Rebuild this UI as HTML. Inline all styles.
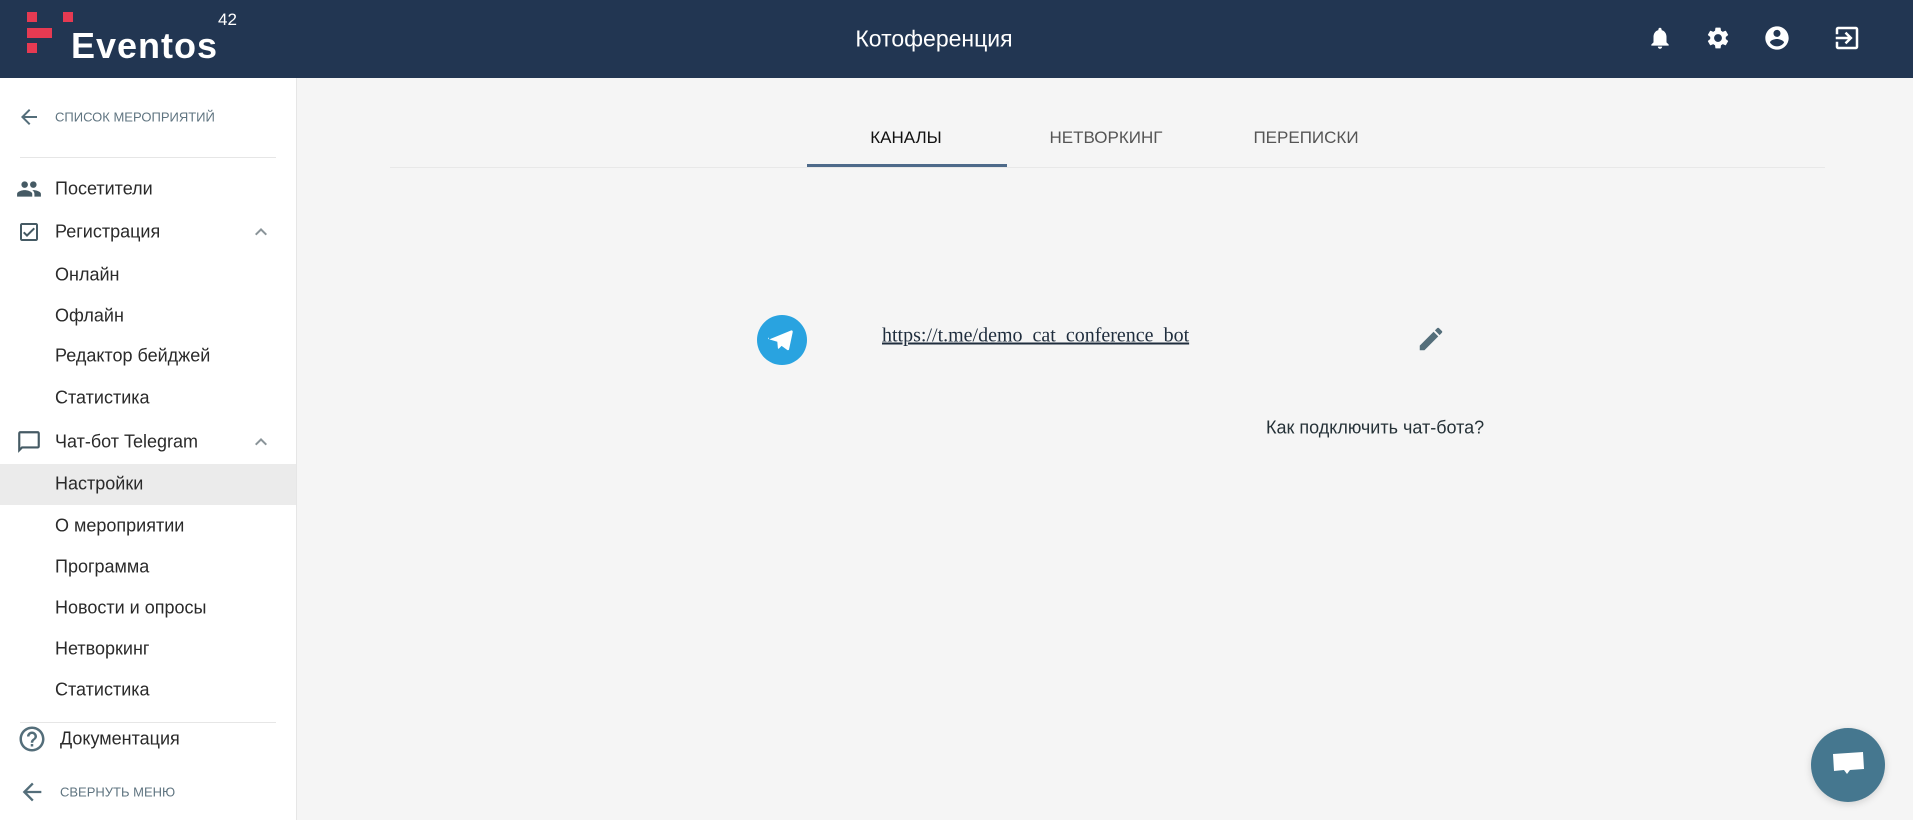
<!DOCTYPE html>
<html><head><meta charset="utf-8"><style>
*{margin:0;padding:0;box-sizing:border-box}
body{width:1913px;height:820px;overflow:hidden;background:#f5f5f5;font-family:"Liberation Sans",Roboto,sans-serif;position:relative;color:#263238}
.hdr{position:absolute;left:0;top:0;width:1913px;height:78px;background:#223652}
.side{position:absolute;left:0;top:78px;width:297px;height:742px;background:#fff;border-right:1px solid #e6e6e6}
.t{position:absolute;white-space:nowrap;transform:translateY(-50%)}
.mi{font-size:18px;color:#2a2a2a;left:55px}
.ic{position:absolute;transform:translate(-50%,-50%)}
</style></head><body>
<div class="hdr">
 <svg style="position:absolute;left:27px;top:12px" width="46" height="41" viewBox="0 0 46 41">
  <rect x="0" y="0" width="10" height="10" fill="#e63a52"/><rect x="36" y="0" width="10" height="10" fill="#e63a52"/>
  <rect x="0" y="16" width="25" height="10" fill="#e63a52"/><rect x="0" y="31" width="10" height="10" fill="#e63a52"/>
 </svg>
 <div class="t" style="left:71px;top:46px;font-size:36px;font-weight:bold;color:#fff;letter-spacing:1px">Eventos</div>
 <div class="t" style="left:218px;top:20px;font-size:17px;color:#fff">42</div>
 <div class="t" style="left:934px;top:39px;font-size:23px;color:#fff;transform:translate(-50%,-50%)">Котоференция</div>
 <svg class="ic" style="left:1660px;top:38px" width="26" height="26" viewBox="0 0 24 24" fill="#fff"><path d="M12 22c1.1 0 2-.9 2-2h-4c0 1.1.9 2 2 2zm6-6v-5c0-3.07-1.64-5.640-4.5-6.32V4c0-.83-.67-1.5-1.5-1.5s-1.5.67-1.5 1.5v.68C7.63 5.36 6 7.92 6 11v5l-2 2v1h16v-1l-2-2z"/></svg>
 <svg class="ic" style="left:1718px;top:38px" width="26" height="26" viewBox="0 0 24 24" fill="#fff"><path d="M19.14 12.94c.04-.3.06-.61.06-.94 0-.32-.02-.64-.07-.94l2.03-1.58c.18-.14.23-.41.12-.61l-1.92-3.320c-.12-.22-.37-.29-.59-.22l-2.39.96c-.5-.38-1.03-.7-1.62-.94l-.36-2.54c-.04-.24-.24-.41-.48-.41h-3.84c-.24 0-.43.17-.47.41l-.36 2.54c-.59.24-1.13.57-1.62.94l-2.39-.96c-.22-.08-.47 0-.59.22L2.74 8.87c-.12.21-.08.47.12.61l2.03 1.58c-.05.3-.09.63-.09.94s.02.64.07.94l-2.03 1.58c-.18.14-.23.41-.12.61l1.92 3.32c.12.22.37.29.59.22l2.39-.96c.5.38 1.03.7 1.62.94l.36 2.54c.05.24.24.41.48.41h3.84c.24 0 .44-.17.47-.41l.36-2.54c.59-.24 1.13-.56 1.62-.94l2.39.96c.22.08.47 0 .59-.22l1.92-3.32c.12-.22.07-.47-.12-.61l-2.01-1.58zM12 15.6c-1.98 0-3.6-1.62-3.6-3.6s1.62-3.6 3.6-3.6 3.6 1.62 3.6 3.6-1.62 3.6-3.6 3.6z"/></svg>
 <svg class="ic" style="left:1777px;top:38px" width="28" height="28" viewBox="0 0 24 24" fill="#fff"><path d="M12 2C6.48 2 2 6.48 2 12s4.48 10 10 10 10-4.48 10-10S17.52 2 12 2zm0 3c1.66 0 3 1.34 3 3s-1.34 3-3 3-3-1.34-3-3 1.34-3 3-3zm0 14.2c-2.5 0-4.71-1.28-6-3.22.03-1.99 4-3.08 6-3.08 1.99 0 5.97 1.09 6 3.08-1.29 1.94-3.5 3.22-6 3.22z"/></svg>
 <svg class="ic" style="left:1847px;top:38px" width="30" height="30" viewBox="0 0 24 24" fill="#fff"><path d="M10.09 15.59L11.5 17l5-5-5-5-1.41 1.41L12.67 11H3v2h9.67l-2.58 2.59zM19 3H5c-1.11 0-2 .9-2 2v4h2V5h14v14H5v-4H3v4c0 1.1.89 2 2 2h14c1.1 0 2-.9 2-2V5c0-1.1-.9-2-2-2z"/></svg>
</div>
<div class="side">
 <div style="position:absolute;left:0;top:386px;width:296px;height:41px;background:#ebebeb"></div>
 <div style="position:absolute;left:20px;top:79px;width:256px;height:1px;background:#e6e6e6"></div>
 <div style="position:absolute;left:20px;top:644px;width:256px;height:1px;background:#e6e6e6"></div>
</div>
<svg class="ic" style="left:29px;top:117px" width="24" height="24" viewBox="0 0 24 24" fill="#546e7a"><path d="M20 11H7.83l5.59-5.59L12 4l-8 8 8 8 1.41-1.41L7.83 13H20v-2z"/></svg>
<div class="t" style="left:55px;top:117px;font-size:13px;color:#5f7480">СПИСОК МЕРОПРИЯТИЙ</div>
<svg class="ic" style="left:29px;top:189px" width="26" height="26" viewBox="0 0 24 24" fill="#455a64"><path d="M16 11c1.66 0 2.99-1.34 2.99-3S17.66 5 16 5c-1.66 0-3 1.34-3 3s1.34 3 3 3zm-8 0c1.66 0 2.99-1.34 2.99-3S9.66 5 8 5C6.34 5 5 6.34 5 8s1.34 3 3 3zm0 2c-2.33 0-7 1.17-7 3.5V19h14v-2.5c0-2.33-4.67-3.5-7-3.5zm8 0c-.29 0-.62.02-.97.05 1.16.84 1.97 1.970 1.97 3.45V19h6v-2.5c0-2.33-4.67-3.5-7-3.5z"/></svg>
<div class="t mi" style="top:189px">Посетители</div>
<svg class="ic" style="left:29px;top:232px" width="24" height="24" viewBox="0 0 24 24" fill="#455a64"><path d="M19 3H5c-1.11 0-2 .9-2 2v14c0 1.1.89 2 2 2h14c1.11 0 2-.9 2-2V5c0-1.1-.89-2-2-2zm0 16H5V5h14v14zM17.99 9l-1.41-1.42-6.59 6.59-2.58-2.57-1.42 1.41 4 3.99z"/></svg>
<div class="t mi" style="top:232px">Регистрация</div>
<svg class="ic" style="left:261px;top:232px" width="24" height="24" viewBox="0 0 24 24" fill="#8a9499"><path d="M7.41 15.41L12 10.83l4.59 4.58L18 14l-6-6-6 6z"/></svg>
<div class="t mi" style="top:275px">Онлайн</div>
<div class="t mi" style="top:316px">Офлайн</div>
<div class="t mi" style="top:356px">Редактор бейджей</div>
<div class="t mi" style="top:398px">Статистика</div>
<svg class="ic" style="left:29px;top:442px" width="26" height="26" viewBox="0 0 24 24" fill="#455a64"><path d="M20 2H4c-1.1 0-1.99.9-1.99 2L2 22l4-4h14c1.1 0 2-.9 2-2V4c0-1.1-.9-2-2-2zm0 14H5.17L4 17.17V4h16v12z"/></svg>
<div class="t mi" style="top:442px">Чат-бот Telegram</div>
<svg class="ic" style="left:261px;top:442px" width="24" height="24" viewBox="0 0 24 24" fill="#8a9499"><path d="M7.41 15.41L12 10.83l4.59 4.58L18 14l-6-6-6 6z"/></svg>
<div class="t mi" style="top:484px">Настройки</div>
<div class="t mi" style="top:526px">О мероприятии</div>
<div class="t mi" style="top:567px">Программа</div>
<div class="t mi" style="top:608px">Новости и опросы</div>
<div class="t mi" style="top:649px">Нетворкинг</div>
<div class="t mi" style="top:690px">Статистика</div>
<svg class="ic" style="left:32px;top:739px" width="30" height="30" viewBox="0 0 24 24" fill="#546e7a"><path d="M11 18h2v-2h-2v2zm1-16C6.48 2 2 6.48 2 12s4.48 10 10 10 10-4.48 10-10S17.52 2 12 2zm0 18c-4.41 0-8-3.59-8-8s3.59-8 8-8 8 3.59 8 8-3.59 8-8 8zm0-14c-2.210 0-4 1.79-4 4h2c0-1.1.9-2 2-2s2 .9 2 2c0 2-3 1.75-3 5h2c0-2.25 3-2.5 3-5 0-2.21-1.79-4-4-4z"/></svg>
<div class="t mi" style="left:60px;top:739px">Документация</div>
<svg class="ic" style="left:32px;top:792px" width="28" height="28" viewBox="0 0 24 24" fill="#546e7a"><path d="M20 11H7.83l5.59-5.59L12 4l-8 8 8 8 1.41-1.41L7.83 13H20v-2z"/></svg>
<div class="t" style="left:60px;top:792px;font-size:13px;color:#5f7480">СВЕРНУТЬ МЕНЮ</div>

<div style="position:absolute;left:390px;top:167px;width:1435px;height:1px;background:#e8e8e8"></div>
<div style="position:absolute;left:807px;top:164px;width:200px;height:3px;background:#4e6a8a"></div>
<div class="t" style="left:906px;top:138px;font-size:17px;color:#111;transform:translate(-50%,-50%)">КАНАЛЫ</div>
<div class="t" style="left:1106px;top:138px;font-size:17px;color:#555;transform:translate(-50%,-50%)">НЕТВОРКИНГ</div>
<div class="t" style="left:1306px;top:138px;font-size:17px;color:#555;transform:translate(-50%,-50%)">ПЕРЕПИСКИ</div>

<svg class="ic" style="left:782px;top:340px" width="50" height="50" viewBox="0 0 50 50"><circle cx="25" cy="25" r="25" fill="#29a3e0"/><path d="M12 24.5l22-9c1-.4 2 .3 1.7 1.6l-3.6 17c-.2 1.1-1.2 1.4-2 .8l-5.5-4-2.6 2.6c-.4.4-1 .3-1.1-.3l-.6-6.4-8.4-2.6c-.9-.3-.9-1.2.1-1.7z" fill="#fff"/></svg>
<div class="t" style="left:882px;top:336px;font-family:'Liberation Serif',serif;font-size:20px;color:#1f2d3d;text-decoration:underline">https://t.me/demo_cat_conference_bot</div>
<svg class="ic" style="left:1431px;top:339px" width="30" height="30" viewBox="0 0 24 24" fill="#546e7a"><path d="M3 17.25V21h3.75L17.81 9.94l-3.75-3.75L3 17.25zM20.71 7.04c.39-.39.39-1.02 0-1.41l-2.34-2.34c-.39-.39-1.02-.39-1.41 0l-1.83 1.83 3.75 3.75 1.83-1.83z"/></svg>
<div class="t" style="left:1266px;top:428px;font-size:18px;color:#263238">Как подключить чат-бота?</div>

<div style="position:absolute;left:1811px;top:728px;width:74px;height:74px;border-radius:50%;background:#45778f;box-shadow:0 2px 8px rgba(0,0,0,.15)"></div>
<svg class="ic" style="left:1848px;top:766px" width="40" height="40" viewBox="0 0 40 40"><path d="M5 8l30-2 1 17-14 1-3 4-3-4-10 1z" fill="#fff"/></svg>
</body></html>
